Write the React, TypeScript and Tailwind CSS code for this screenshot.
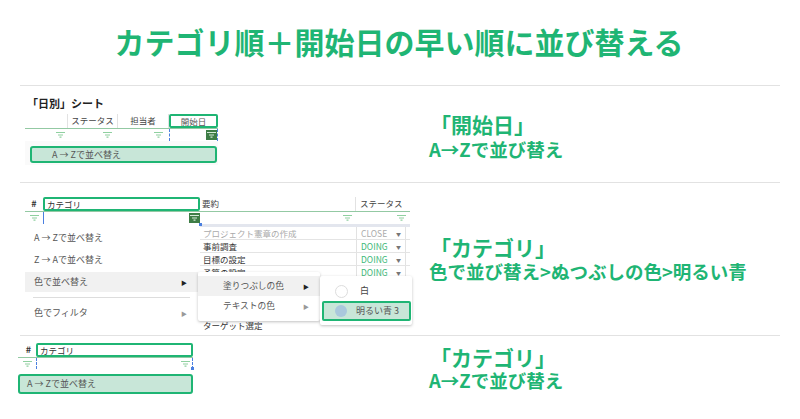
function FilterIcon({ active = false }: { active?: boolean }) {
  const color = active ? "#d5ead9" : "#8fd0a0";
  const icon = (
    <svg width="9" height="6" viewBox="0 0 9 6">
      <path d="M0 0.5h9M2 3h5M3.5 5.2h2" stroke={color} strokeWidth="1.2" fill="none" />
    </svg>
  );
  if (!active) return icon;
  return <div className="flex h-[10px] w-[11px] items-center justify-center bg-[#3e7d46]">{icon}</div>;
}

function Heading({ title, sub, subClass = "" }: { title: string; sub: string; subClass?: string }) {
  return (
    <div className="font-bold text-[#1fb574]">
      <div className="pl-[1px] text-[21px] leading-[26px]">{title}</div>
      <div className={`whitespace-nowrap text-[18.5px] leading-[22px] ${subClass}`}>{sub}</div>
    </div>
  );
}

function HeaderCell({ label, className }: { label: string; className: string }) {
  return <div className={`flex h-[14px] items-center border-r border-[#e2e2e2] pb-[2px] text-[8.5px] text-[#444] ${className}`}>{label}</div>;
}

function MenuItem({ label, arrow, active }: { label: string; arrow?: "on" | "off"; active?: boolean }) {
  return (
    <div className={`flex h-[20px] items-center justify-between pl-[9px] pr-[11px] text-[9px] text-[#555] ${active ? "bg-[#f1f1f1]" : ""}`}>
      <span>{label}</span>
      {arrow && <span className={`text-[6px] ${arrow === "on" ? "text-[#222]" : "text-[#999]"}`}>▶</span>}
    </div>
  );
}

function DataRow({ label, status, muted }: { label: string; status: string; muted?: boolean }) {
  return (
    <div className="flex h-[13px] border-b border-[#e4e4e4] text-[8.5px] leading-[13px]">
      <div className={`w-[156px] pl-[3px] ${muted ? "text-[#aaa]" : "text-[#333]"}`}>{label}</div>
      <div className={`flex w-[50px] items-center justify-between border-x border-[#e2e2e2] pl-[4px] pr-[4px] ${muted ? "text-[#aaa]" : "text-[#3cb878]"}`}>
        <span>{status}</span>
        <span className="text-[5px] text-[#777]">▼</span>
      </div>
    </div>
  );
}

function SheetOne() {
  return (
    <div className="pl-[5px] pt-[9px]">
      <div className="pl-[2px] text-[11px] font-bold leading-[16px] text-[#222]">「日別」シート</div>
      <div className="mt-[3px] flex w-[193px] border-b border-[#93c9a3]">
        <HeaderCell label="" className="w-[43px]" />
        <HeaderCell label="ステータス" className="w-[50px] justify-center" />
        <HeaderCell label="担当者" className="w-[51px] justify-center" />
        <div className="flex h-[14px] w-[49px] items-center justify-center rounded-[2px] border-2 border-[#1fb574] text-[8.5px] text-[#555]">開始日</div>
      </div>
      <div className="flex h-[12px] w-[193px] items-center">
        <div className="flex w-[43px] justify-end pr-[3px]"><FilterIcon /></div>
        <div className="flex w-[50px] justify-end pr-[6px]"><FilterIcon /></div>
        <div className="flex w-[51px] justify-end pr-[6px]"><FilterIcon /></div>
        <div className="flex h-full w-[49px] items-center justify-end border-x border-dashed border-[#4a7fe0]"><FilterIcon active /></div>
      </div>
      <div className="w-[193px] bg-[#fafafa] pb-[2px] pl-[5px] pr-[1px] pt-[5px]">
        <div className="flex h-[17px] items-center rounded-[3px] border-2 border-[#1fb574] bg-[#c8e6d8] pl-[20px] text-[9px] text-[#555]">A → Zで並べ替え</div>
      </div>
    </div>
  );
}

function SheetTwo() {
  return (
    <div className="relative pl-[5px] pt-[14px]">
      <div className="flex w-[385px] border-b border-[#93c9a3]">
        <div className="flex h-[14px] w-[18px] items-center justify-center text-[9px] font-bold text-[#333]">#</div>
        <div className="flex h-[14px] w-[157px] items-center rounded-[2px] border-2 border-[#1fb574] pl-[2px] text-[8.5px] text-[#333]">カテゴリ</div>
        <HeaderCell label="要約" className="w-[156px] pl-[2px]" />
        <div className="flex h-[14px] w-[54px] items-center pb-[2px] pl-[4px] text-[8.5px] text-[#444]">ステータス</div>
      </div>
      <div className="flex h-[12px] w-[385px] items-center">
        <div className="flex w-[18px] justify-center"><FilterIcon /></div>
        <div className="relative flex h-full w-[157px] items-center justify-end border-l border-[#4a7fe0]">
          <FilterIcon active />
          <div className="absolute -bottom-[2px] -right-[2px] h-[3px] w-[3px] bg-[#4a7fe0]" />
        </div>
        <div className="flex w-[156px] justify-end pr-[4px]"><FilterIcon /></div>
        <div className="flex w-[54px] justify-end pr-[4px]"><FilterIcon /></div>
      </div>
      <div className="ml-[175px] h-[3px] w-[210px] bg-[#e3e6ee]" />
      <div className="ml-[175px] w-[210px]">
        <DataRow label="プロジェクト憲章の作成" status="CLOSE" muted />
        <DataRow label="事前調査" status="DOING" />
        <DataRow label="目標の設定" status="DOING" />
        <DataRow label="予算の設定" status="DOING" />
      </div>
      <div className="ml-[175px] mt-[40px] w-[210px] pl-[3px] text-[8.5px] leading-[12px] text-[#333]">ターゲット選定</div>

      <div className="absolute left-[5px] top-[41px] w-[173px] bg-white pb-[6px] pt-[4px]">
        <MenuItem label="A → Zで並べ替え" />
        <div className="h-[2px]" />
        <MenuItem label="Z → Aで並べ替え" />
        <div className="h-[2px]" />
        <MenuItem label="色で並べ替え" arrow="on" active />
        <div className="mx-[8px] my-[5px] h-px bg-[#ddd]" />
        <MenuItem label="色でフィルタ" arrow="off" />
      </div>

      <div className="absolute left-[178px] top-[89px] w-[122px] rounded-[2px] bg-white pb-[5px] pt-[4px] shadow-[0_1px_3px_rgba(0,0,0,0.25)]">
        <div className="flex h-[20px] items-center justify-between bg-[#f1f1f1] pl-[25px] pr-[11px] text-[8.7px] text-[#555]">
          <span>塗りつぶしの色</span>
          <span className="text-[6px] text-[#222]">▶</span>
        </div>
        <div className="flex h-[20px] items-center justify-between pl-[25px] pr-[11px] text-[8.7px] text-[#555]">
          <span>テキストの色</span>
          <span className="text-[6px] text-[#999]">▶</span>
        </div>
      </div>

      <div className="absolute left-[300px] top-[93px] w-[92px] rounded-[2px] bg-white pb-[4px] pt-[5px] shadow-[0_1px_3px_rgba(0,0,0,0.25)]">
        <div className="flex h-[20px] items-center gap-[12px] pl-[15px] text-[9px] text-[#444]">
          <div className="h-[13px] w-[13px] rounded-full border border-[#ddd] bg-white" />
          <span>白</span>
        </div>
        <div className="ml-[2px] flex h-[20px] w-[89px] items-center gap-[9px] rounded-[2px] border-2 border-[#1fb574] bg-[#c8e6d8] pl-[11px] text-[9px] text-[#555]">
          <div className="h-[12px] w-[12px] rounded-full bg-[#a9c8dc]" />
          <span>明るい青 3</span>
        </div>
      </div>
    </div>
  );
}

function SheetThree() {
  return (
    <div className="pt-[7px]">
      <div className="-ml-[2px] flex w-[175px] border-b border-[#93c9a3]">
        <div className="flex h-[14px] w-[18px] items-center justify-end pr-[5px] text-[9px] font-bold text-[#333]">#</div>
        <div className="flex h-[14px] w-[157px] items-center rounded-[2px] border-2 border-[#1fb574] pl-[2px] text-[8.5px] text-[#333]">カテゴリ</div>
      </div>
      <div className="-ml-[2px] flex h-[11px] w-[175px] items-center">
        <div className="flex w-[18px] justify-end pr-[4px]"><FilterIcon /></div>
        <div className="relative flex h-full w-[157px] items-center justify-end border-x border-dashed border-[#4a7fe0] pr-[2px]">
          <FilterIcon />
          <div className="absolute -bottom-[1px] -right-[2px] h-[3px] w-[3px] bg-[#4a7fe0]" />
        </div>
      </div>
      <div className="-ml-[2px] mt-[5px] flex h-[20px] w-[175px] items-center rounded-[3px] border-2 border-[#1fb574] bg-[#c8e6d8] pl-[7px] text-[9px] text-[#555]">A → Zで並べ替え</div>
    </div>
  );
}

export default function App() {
  return (
    <div className="flex h-[419px] w-[800px] flex-col overflow-hidden bg-white font-['Noto_Sans_CJK_JP',sans-serif]">
      <h1 className="flex h-[85px] items-center justify-center pb-[2px] pr-[2px] text-[30px] font-bold text-[#1fb574]">カテゴリ順＋開始日の早い順に並び替える</h1>
      <div className="mx-[20px] flex h-[97px] border-t border-[#e2e2e2]">
        <div className="w-[409px]"><SheetOne /></div>
        <div className="pt-[25px]"><Heading title="「開始日」" sub="A→Zで並び替え" subClass="mt-[1px]" /></div>
      </div>
      <div className="mx-[20px] flex h-[153px] border-t border-[#e2e2e2]">
        <div className="w-[409px]"><SheetTwo /></div>
        <div className="pt-[51px]"><Heading title="「カテゴリ」" sub="色で並び替え>ぬつぶしの色>明るい青" /></div>
      </div>
      <div className="mx-[20px] flex h-[84px] border-t border-[#e2e2e2]">
        <div className="w-[409px]"><SheetThree /></div>
        <div className="pt-[8px]"><Heading title="「カテゴリ」" sub="A→Zで並び替え" subClass="-mt-[1px]" /></div>
      </div>
    </div>
  );
}
